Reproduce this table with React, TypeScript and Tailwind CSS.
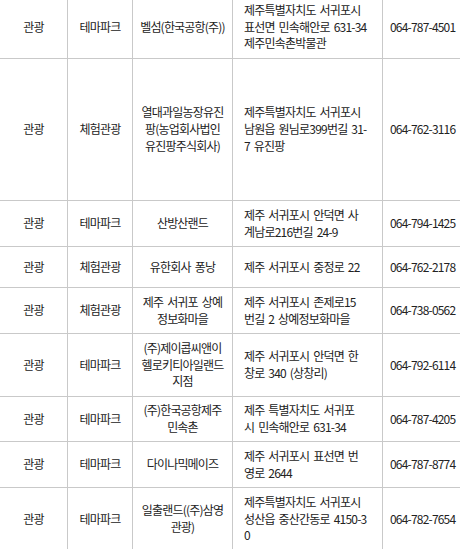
type Row = {
  h: string;
  cat: string;
  type: string;
  name: string[];
  addr: string[];
  tel: string;
};

const rows: Row[] = [
  { h: "h-[63px]", cat: "관광", type: "테마파크", name: ["벨섬(한국공항(주))"], addr: ["제주특별자치도 서귀포시", "표선면 민속해안로 631-34", "제주민속촌박물관"], tel: "064-787-4501" },
  { h: "h-[142px]", cat: "관광", type: "체험관광", name: ["열대과일농장유진", "팡(농업회사법인", "유진팡주식회사)"], addr: ["제주특별자치도 서귀포시", "남원읍 원님로399번길 31-", "7 유진팡"], tel: "064-762-3116" },
  { h: "h-[46px]", cat: "관광", type: "테마파크", name: ["산방산랜드"], addr: ["제주 서귀포시 안덕면 사", "계남로216번길 24-9"], tel: "064-794-1425" },
  { h: "h-[41px]", cat: "관광", type: "체험관광", name: ["유한회사 퐁낭"], addr: ["제주 서귀포시 중정로 22"], tel: "064-762-2178" },
  { h: "h-[46px]", cat: "관광", type: "체험관광", name: ["제주 서귀포 상예", "정보화마을"], addr: ["제주 서귀포시 존제로15", "번길 2 상예정보화마을"], tel: "064-738-0562" },
  { h: "h-[63px]", cat: "관광", type: "테마파크", name: ["(주)제이콥씨앤이", "헬로키티아일랜드", "지점"], addr: ["제주 서귀포시 안덕면 한", "창로 340 (상창리)"], tel: "064-792-6114" },
  { h: "h-[45px]", cat: "관광", type: "테마파크", name: ["(주)한국공항제주", "민속촌"], addr: ["제주 특별자치도 서귀포", "시 민속해안로 631-34"], tel: "064-787-4205" },
  { h: "h-[46px]", cat: "관광", type: "테마파크", name: ["다이나믹메이즈"], addr: ["제주 서귀포시 표선면 번", "영로 2644"], tel: "064-787-8774" },
  { h: "h-[63px]", cat: "관광", type: "테마파크", name: ["일출랜드((주)삼영", "관광)"], addr: ["제주특별자치도 서귀포시", "성산읍 중산간동로 4150-3", "0"], tel: "064-782-7654" },
];

const cell = "flex flex-col justify-center border-r border-b border-[#c9c9c9] shrink-0";

function Lines({ lines }: { lines: string[] }) {
  return (
    <>
      {lines.map((l, i) => (
        <div key={i} className="whitespace-nowrap">
          {l}
        </div>
      ))}
    </>
  );
}

export default function App() {
  return (
    <div
      className="w-[460px] h-[549px] overflow-hidden bg-white text-[#222] text-[12px] leading-[16.8px] tracking-[-0.8px] [word-spacing:2px]"
      style={{ fontFamily: '"Noto Sans CJK KR", "Noto Sans", sans-serif' }}
    >
      <div className="-mt-[4px] w-[620px]">
        {rows.map((r, i) => (
          <div key={i} className={`flex ${r.h}`}>
            <div className={`${cell} w-[68px] items-center`}>{r.cat}</div>
            <div className={`${cell} w-[65px] items-center`}>{r.type}</div>
            <div className={`${cell} w-[100px] items-center text-center`}>
              <Lines lines={r.name} />
            </div>
            <div className={`${cell} w-[150px] pl-[11px]`}>
              <Lines lines={r.addr} />
            </div>
            <div className={`${cell} w-[237px] pl-[7px]`}>{r.tel}</div>
          </div>
        ))}
      </div>
    </div>
  );
}
